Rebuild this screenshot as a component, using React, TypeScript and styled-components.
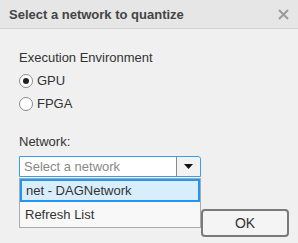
import React, { useState } from "react"
import styled, { createGlobalStyle } from "styled-components"

const GlobalStyle = createGlobalStyle`
  html, body {
    margin: 0;
    padding: 0;
    background: #f0f0f0;
  }
  body {
    font-family: "Liberation Sans", Arial, sans-serif;
  }
`

const Dialog = styled.div`
  width: 298px;
  height: 243px;
  display: flex;
  flex-direction: column;
  background: #f0f0f0;
  overflow: hidden;
  color: #333;
`

const TitleBar = styled.div`
  height: 28px;
  flex: none;
  display: flex;
  align-items: center;
  justify-content: space-between;
  padding: 0 9px;
  background: #e6e6e6;
  border-bottom: 1px solid #d4d4d4;
`

const Title = styled.span`
  font-size: 13px;
  font-weight: bold;
  color: #444;
`

const CloseButton = styled.button`
  border: none;
  background: none;
  padding: 0;
  width: 11px;
  height: 11px;
  display: flex;
  cursor: pointer;
`

const Body = styled.div`
  flex: 1;
  position: relative;
  padding: 21px 19px 0;
  display: flex;
  flex-direction: column;
`

const Label = styled.div<{ gap?: number }>`
  font-size: 13px;
  line-height: 16px;
  margin-top: ${({ gap }) => gap ?? 0}px;
`

const RadioGroup = styled.div`
  margin-top: 3px;
`

const RadioRow = styled.label`
  display: flex;
  align-items: center;
  gap: 4px;
  height: 23px;
  font-size: 13px;
  cursor: pointer;
`

const RadioCircle = styled.span<{ checked: boolean }>`
  width: 12px;
  height: 12px;
  border-radius: 50%;
  border: 1px solid #8a8a8a;
  background: #fff;
  display: flex;
  align-items: center;
  justify-content: center;
  &::after {
    content: "";
    width: 6px;
    height: 6px;
    border-radius: 50%;
    background: ${({ checked }) => (checked ? "#222" : "transparent")};
  }
`

const ComboWrap = styled.div`
  position: relative;
  width: 182px;
  margin-top: 6px;
`

const Combo = styled.div`
  height: 19px;
  display: flex;
  border: 1px solid #3a9fe8;
  border-top-right-radius: 3px;
  background: #fff;
`

const ComboText = styled.div`
  flex: 1;
  font-size: 13px;
  line-height: 19px;
  padding-left: 4px;
  color: #888;
`

const ArrowButton = styled.div`
  width: 23px;
  border-left: 1px solid #8a8a8a;
  background: #f2f2f2;
  display: flex;
  align-items: center;
  justify-content: center;
  border-top-right-radius: 3px;
`

const Menu = styled.div`
  position: absolute;
  top: 22px;
  left: 0;
  width: 180px;
  border: 1px solid #aaa;
  background: #f8f8f8;
  z-index: 2;
`

const MenuItem = styled.div<{ active?: boolean }>`
  height: ${({ active }) => (active ? 19 : 25)}px;
  line-height: ${({ active }) => (active ? 19 : 25)}px;
  padding-left: ${({ active }) => (active ? 4 : 5)}px;
  font-size: 13px;
  color: #333;
  background: ${({ active }) => (active ? "#d9eefc" : "transparent")};
  border: ${({ active }) => (active ? "2px solid #2196f3" : "none")};
`

const Footer = styled.div`
  margin-top: auto;
  margin-right: -10px;
  padding-bottom: 6px;
  display: flex;
  justify-content: flex-end;
`

const OkButton = styled.button`
  box-sizing: border-box;
  width: 88px;
  height: 28px;
  border: 2px solid #7a7a7a;
  border-radius: 4px;
  background: #f4f4f4;
  font-family: "Liberation Sans", Arial, sans-serif;
  font-size: 14px;
  color: #333;
  cursor: pointer;
`

const App = (): JSX.Element => {
  const [env, setEnv] = useState("GPU")
  const options = ["GPU", "FPGA"]

  return (
    <>
      <GlobalStyle />
      <Dialog>
        <TitleBar>
          <Title>Select a network to quantize</Title>
          <CloseButton aria-label="Close">
            <svg width="11" height="11" viewBox="0 0 11 11">
              <path d="M1 1 L10 10 M10 1 L1 10" stroke="#9a9a9a" strokeWidth="2" />
            </svg>
          </CloseButton>
        </TitleBar>
        <Body>
          <Label>Execution Environment</Label>
          <RadioGroup>
            {options.map((o) => (
              <RadioRow key={o} onClick={() => setEnv(o)}>
                <RadioCircle checked={env === o} />
                {o}
              </RadioRow>
            ))}
          </RadioGroup>
          <Label gap={19}>Network:</Label>
          <ComboWrap>
            <Combo>
              <ComboText>Select a network</ComboText>
              <ArrowButton>
                <svg width="9" height="5" viewBox="0 0 9 5">
                  <path d="M0 0 H9 L4.5 5 Z" fill="#111" />
                </svg>
              </ArrowButton>
            </Combo>
            <Menu>
              <MenuItem active>net - DAGNetwork</MenuItem>
              <MenuItem>Refresh List</MenuItem>
            </Menu>
          </ComboWrap>
          <Footer>
            <OkButton>OK</OkButton>
          </Footer>
        </Body>
      </Dialog>
    </>
  )
}

export default App
